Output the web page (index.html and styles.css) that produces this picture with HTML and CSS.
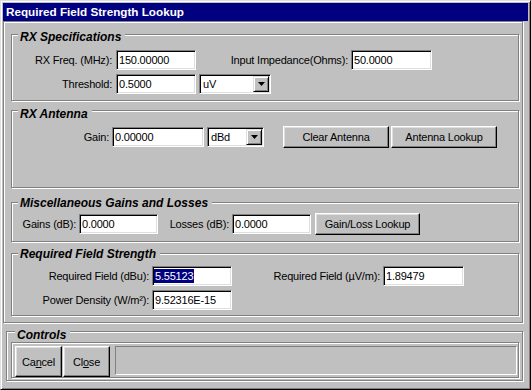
FILE: index.html
```html
<!DOCTYPE html>
<html lang="en">
<head>
    <meta charset="UTF-8">
    <title>Required Field Strength Lookup</title>
    <link rel="stylesheet" href="styles.css">
</head>
<body>

    <div class="window">
        <div class="titlebar">Required Field Strength Lookup</div>

        <div class="frame frame-main">

            <div class="group group-spec">
                <span class="group-title">RX Specifications</span>
                <div class="row">
                    <span class="lbl lbl-spec">RX Freq. (MHz):</span>
                    <div class="field w80">150.00000</div>
                    <span class="lbl lbl-imp">Input Impedance(Ohms):</span>
                    <div class="field w81">50.0000</div>
                </div>
                <div class="row">
                    <span class="lbl lbl-spec">Threshold:</span>
                    <div class="field w80">0.5000</div>
                    <div class="combo combo-unit">
                        <span>uV</span>
                        <span class="drop"><svg width="7" height="4" viewBox="0 0 7 4"><polygon points="0,0 7,0 3.5,4" fill="#000"/></svg></span>
                    </div>
                </div>
            </div>

            <div class="group group-antenna">
                <span class="group-title">RX Antenna</span>
                <div class="row row-tall">
                    <span class="lbl lbl-gain">Gain:</span>
                    <div class="field w92">0.00000</div>
                    <div class="combo combo-dbd">
                        <span>dBd</span>
                        <span class="drop"><svg width="7" height="4" viewBox="0 0 7 4"><polygon points="0,0 7,0 3.5,4" fill="#000"/></svg></span>
                    </div>
                    <button class="btn btn-clear">Clear Antenna</button>
                    <button class="btn btn-lookup">Antenna Lookup</button>
                </div>
            </div>

            <div class="group group-misc">
                <span class="group-title">Miscellaneous Gains and Losses</span>
                <div class="row row-tall">
                    <span class="lbl lbl-gains">Gains (dB):</span>
                    <div class="field w79">0.0000</div>
                    <span class="lbl lbl-losses">Losses (dB):</span>
                    <div class="field w79">0.0000</div>
                    <button class="btn btn-gainloss">Gain/Loss Lookup</button>
                </div>
            </div>

            <div class="group group-field">
                <span class="group-title">Required Field Strength</span>
                <div class="row">
                    <span class="lbl lbl-req">Required Field (dBu):</span>
                    <div class="field w80"><span class="selected">5.55123</span></div>
                    <span class="lbl lbl-uv">Required Field (µV/m):</span>
                    <div class="field w81">1.89479</div>
                </div>
                <div class="row">
                    <span class="lbl lbl-req">Power Density (W/m²):</span>
                    <div class="field w80">9.52316E-15</div>
                </div>
            </div>

        </div>

        <div class="frame frame-controls">
            <span class="group-title controls-title">Controls</span>
            <div class="controls-box">
                <button class="btn btn-cmd">Ca<u>n</u>cel</button>
                <button class="btn btn-cmd">Cl<u>o</u>se</button>
                <div class="status"></div>
            </div>
        </div>
    </div>

</body>
</html>
```

FILE: styles.css
```css
body {
    margin: 0;
    background: #c0c0c0;
    font-family: "Liberation Sans", Arial, sans-serif;
    font-size: 11px;
    letter-spacing: -0.2px;
    color: #000;
}

.window {
    width: 531px;
    height: 390px;
    box-sizing: border-box;
    border: 1px solid;
    border-color: #dfdfdf #000 #000 #dfdfdf;
    box-shadow: inset 1px 1px #fff, inset -1px -1px #808080;
    padding: 2px 0 0 2px;
}

.titlebar {
    width: 525px;
    height: 18px;
    line-height: 18px;
    padding-left: 3px;
    box-sizing: border-box;
    background: #000080;
    color: #fff;
    font-weight: bold;
    font-size: 11.7px;
    letter-spacing: 0;
}

/* etched frames and group boxes */
.frame, .group, .controls-box {
    position: relative;
    box-sizing: border-box;
    border: 1px solid #808080;
    box-shadow: inset 1px 1px #fff, 1px 1px #fff;
}

.frame-main {
    width: 520px;
    height: 302px;
    padding-left: 7px;
    display: flex;
    flex-direction: column;
}

.frame-controls {
    width: 517px;
    height: 50px;
    margin: 8px 0 0 3px;
    padding: 10px 0 0 4px;
}

.group {
    width: 508px;
    flex: none;
}

.group-title {
    position: absolute;
    left: 6px;
    top: -5px;
    padding: 0 4px 0 2px;
    background: #c0c0c0;
    font-size: 12px;
    font-weight: bold;
    font-style: italic;
    letter-spacing: 0;
    line-height: 14px;
}

.group-spec {
    margin-top: 12px;
    height: 67px;
    padding-top: 15px;
}

.group-antenna {
    margin-top: 9px;
    height: 78px;
    padding-top: 15px;
}

.group-antenna .group-title {
    top: -4px;
}

.group-misc {
    margin-top: 14px;
    height: 40px;
    padding-top: 10px;
}

.group-misc .group-title,
.group-field .group-title {
    top: -7px;
}

.group-field {
    margin-top: 11px;
    height: 63px;
    padding-top: 12px;
}

.row {
    display: flex;
    align-items: center;
    height: 20px;
    margin-bottom: 4px;
}

.row-tall {
    height: 22px;
}

.lbl {
    box-sizing: border-box;
    text-align: right;
    padding-right: 3px;
    white-space: nowrap;
}

.lbl-spec { width: 104px; padding-right: 4px; }
.lbl-imp { width: 155px; }
.lbl-gain { width: 100px; }
.lbl-gains { width: 67px; }
.lbl-losses { width: 74px; }
.lbl-req { width: 140px; }
.lbl-uv { width: 151px; }

/* sunken text boxes */
.field, .combo {
    height: 20px;
    box-sizing: border-box;
    border: 1px solid;
    border-color: #808080 #fff #fff #808080;
    box-shadow: inset 1px 1px #000, inset -1px -1px #dfdfdf;
    background: #fff;
    line-height: 18px;
    padding-left: 2px;
    white-space: nowrap;
}

.w79 { width: 79px; }
.w80 { width: 80px; }
.w81 { width: 81px; }
.w92 { width: 92px; }

.selected {
    display: inline-block;
    background: #000080;
    color: #fff;
    line-height: 14px;
    margin-left: -1px;
    padding: 0 1px;
}

.combo {
    display: flex;
    justify-content: space-between;
    align-items: center;
    padding: 1px;
}

.combo span:first-child {
    padding-left: 2px;
}

.combo-unit { width: 72px; margin-left: 3px; }
.combo-dbd { width: 57px; margin-left: 3px; }

.drop {
    width: 16px;
    height: 16px;
    box-sizing: border-box;
    border: 1px solid;
    border-color: #dfdfdf #000 #000 #dfdfdf;
    box-shadow: inset 1px 1px #fff, inset -1px -1px #808080;
    background: #c0c0c0;
    display: flex;
    align-items: center;
    justify-content: center;
}

/* raised push buttons */
.btn {
    box-sizing: border-box;
    height: 22px;
    padding: 0;
    border: 1px solid;
    border-color: #fff #000 #000 #fff;
    box-shadow: inset -1px -1px #808080, inset 1px 1px #dfdfdf;
    background: #c0c0c0;
    font-family: inherit;
    font-size: 11px;
    letter-spacing: -0.2px;
    color: #000;
}

.btn-clear { width: 106px; margin-left: 19px; }
.btn-lookup { width: 106px; margin-left: 2px; }
.btn-gainloss { width: 105px; margin-left: 4px; }

.controls-title {
    left: 8px;
    top: -4px;
}

.controls-box {
    width: 508px;
    height: 36px;
    display: flex;
    padding: 3px 0 0 3px;
}

.btn-cmd {
    width: 47px;
    height: 31px;
    margin-right: 1px;
}

.status {
    width: 402px;
    height: 29px;
    margin-left: 4px;
    box-sizing: border-box;
    border: 1px solid;
    border-color: #808080 #fff #fff #808080;
}
```
